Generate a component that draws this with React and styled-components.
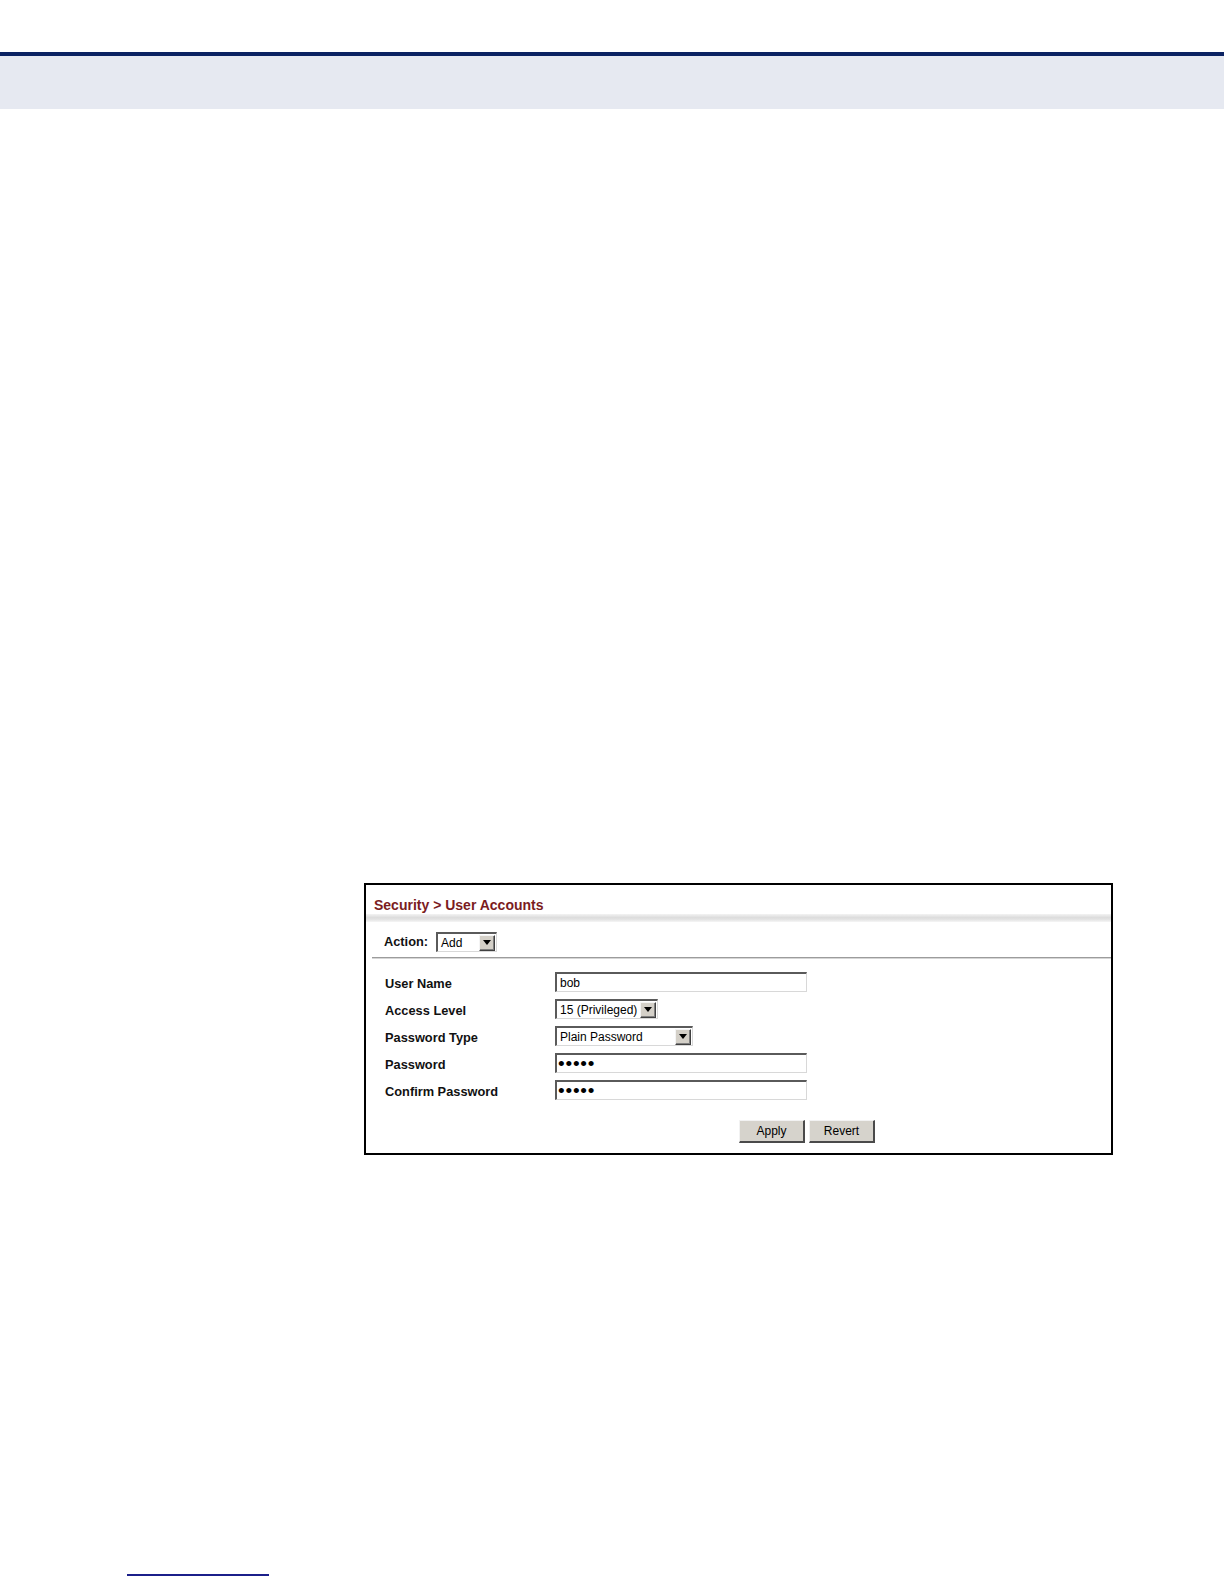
import React from 'react'
import styled, { createGlobalStyle } from 'styled-components'

const GlobalStyle = createGlobalStyle`
  html, body {
    margin: 0;
    padding: 0;
    background: #fff;
  }
  body {
    font-family: "Liberation Sans", Arial, sans-serif;
  }
`

const Page = styled.div`
  width: 1224px;
  min-height: 1584px;
  display: flex;
  flex-direction: column;
  background: #fff;
`

const TopRule = styled.div`
  margin-top: 52px;
  height: 4px;
  background: #0b2262;
`

const HeaderBand = styled.div`
  height: 53px;
  background: #e6e9f1;
`

const Content = styled.div`
  padding: 774px 0 0 364px;
`

const Panel = styled.div`
  width: 749px;
  box-sizing: border-box;
  border: 2px solid #000;
  background: #fff;
  display: flex;
  flex-direction: column;
`

const Title = styled.div`
  padding: 12px 0 0 8px;
  font-size: 14px;
  line-height: 17px;
  font-weight: bold;
  color: #7b1c1e;
`

const TitleShade = styled.div`
  height: 8px;
  background: linear-gradient(to bottom, #f3f3f3 0%, #dcdcdc 45%, #e4e4e4 70%, #f6f6f6 100%);
`

const ActionRow = styled.div`
  margin-top: 10px;
  height: 20px;
  padding-left: 18px;
  display: flex;
  align-items: center;
  gap: 8px;
`

const Label = styled.span`
  font-size: 12.8px;
  font-weight: bold;
  color: #111;
  line-height: 20px;
  padding-top: ${props => props.$drop || 0}px;
`

const Separator = styled.div`
  margin: 5px 0 0 6px;
  border-top: 1px solid #9c9c9c;
  border-bottom: 1px solid #d6d6d6;
`

const Form = styled.div`
  margin-top: 13px;
  padding-left: 19px;
  display: grid;
  grid-template-columns: 170px auto;
  grid-auto-rows: 20px;
  row-gap: 7px;
  justify-items: start;
`

const TextInput = styled.input`
  box-sizing: border-box;
  width: 252px;
  height: 20px;
  margin: 0;
  padding: 0 3px;
  border-style: solid;
  border-width: 2px 1px 1px 2px;
  border-color: #5a5a5a #d8d8d8 #d8d8d8 #5a5a5a;
  background: #fff;
  font-family: "Liberation Sans", Arial, sans-serif;
  font-size: 12px;
  color: #000;
  outline: none;
  &[type='password'] {
    padding: 0 1px;
    font-size: 19px;
    letter-spacing: 0.8px;
  }
`

const SelectBox = styled.div`
  box-sizing: border-box;
  width: ${props => props.$width}px;
  height: 20px;
  display: flex;
  align-items: center;
  border-style: solid;
  border-width: 2px 1px 1px 2px;
  border-color: #5a5a5a #d8d8d8 #d8d8d8 #5a5a5a;
  background: #fff;
  font-size: 12px;
  color: #000;
`

const SelectText = styled.span`
  flex: 1;
  padding-left: 3px;
  white-space: nowrap;
  overflow: hidden;
  line-height: 16px;
`

const ArrowButton = styled.span`
  box-sizing: border-box;
  width: 16px;
  height: 16px;
  margin-right: 1px;
  display: flex;
  align-items: center;
  justify-content: center;
  background: #d4d0c8;
  border-style: solid;
  border-width: 1px;
  border-color: #f4f4f4 #404040 #404040 #f4f4f4;
  box-shadow: inset -1px -1px 0 #808080;
`

const ButtonRow = styled.div`
  margin: 20px 0 10px;
  padding-left: 373px;
  display: flex;
  gap: 4px;
`

const Button = styled.button`
  box-sizing: border-box;
  width: 66px;
  height: 23px;
  margin: 0;
  padding: 0;
  background: #d6d3cc;
  border-style: solid;
  border-width: 1px 2px 2px 1px;
  border-color: #f2f2f2 #4a4a4a #4a4a4a #f2f2f2;
  font-family: "Liberation Sans", Arial, sans-serif;
  font-size: 12px;
  color: #000;
`

const FooterRule = styled.div`
  margin: 419px 0 0 127px;
  width: 142px;
  height: 2px;
  background: #1b1f8a;
`

const Arrow = () => (
  <svg width="8" height="5" viewBox="0 0 8 5">
    <path d="M0 0 H8 L4 5 Z" fill="#000" />
  </svg>
)

const Select = ({ width, children }) => (
  <SelectBox $width={width}>
    <SelectText>{children}</SelectText>
    <ArrowButton><Arrow /></ArrowButton>
  </SelectBox>
)

const fields = [
  { label: 'User Name', kind: 'text', value: 'bob' },
  { label: 'Access Level', kind: 'select', value: '15 (Privileged)', width: 103 },
  { label: 'Password Type', kind: 'select', value: 'Plain Password', width: 138 },
  { label: 'Password', kind: 'password', value: 'bobpw' },
  { label: 'Confirm Password', kind: 'password', value: 'bobpw' }
]

export default function App() {
  return (
    <Page>
      <GlobalStyle />
      <TopRule />
      <HeaderBand />
      <Content>
        <Panel>
          <Title>Security &gt; User Accounts</Title>
          <TitleShade />
          <ActionRow>
            <Label>Action:</Label>
            <Select width={61}>Add</Select>
          </ActionRow>
          <Separator />
          <Form>
            {fields.map(f => (
              <React.Fragment key={f.label}>
                <Label $drop={2}>{f.label}</Label>
                {f.kind === 'select'
                  ? <Select width={f.width}>{f.value}</Select>
                  : <TextInput type={f.kind} value={f.value} readOnly />}
              </React.Fragment>
            ))}
          </Form>
          <ButtonRow>
            <Button>Apply</Button>
            <Button>Revert</Button>
          </ButtonRow>
        </Panel>
      </Content>
      <FooterRule />
    </Page>
  )
}
